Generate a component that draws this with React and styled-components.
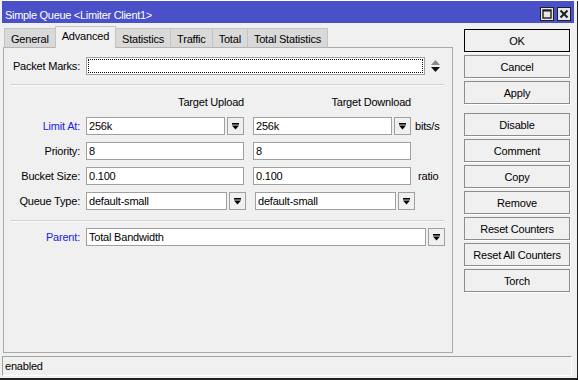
import React from "react";
import styled, { createGlobalStyle } from "styled-components";

const GlobalStyle = createGlobalStyle`
  html, body { margin: 0; padding: 0; background: #ffffff; }
  body {
    font-family: "Liberation Sans", Arial, sans-serif;
    font-size: 11px;
    letter-spacing: -0.2px;
    color: #000;
  }
  * { box-sizing: border-box; }
`;

const Frame = styled.div`
  width: 579px;
  height: 380px;
  padding-top: 1px;
  background: #fff;
`;

const Window = styled.div`
  width: 578px;
  height: 379px;
  display: flex;
  flex-direction: column;
  background: #f0f0f0;
  border-right: 1px solid #222;
  border-bottom: 2px solid #222;
`;

const TitleBar = styled.div`
  height: 22px;
  margin: 0 3px 0 2px;
  background: #4a50c8;
  color: #fff;
  display: flex;
  align-items: flex-end;
  justify-content: space-between;
  padding: 0 3px 1px 3px;
`;

const TitleText = styled.div`
  line-height: 14px;
  font-size: 11px;
  letter-spacing: -0.3px;
`;

const TitleButtons = styled.div`
  display: flex;
  gap: 3px;
  margin-bottom: 1px;
`;

const TitleButton = styled.div`
  width: 14px;
  height: 14px;
  border: 1px solid #1e1e1e;
  background: #e6e6e6;
  display: flex;
  align-items: center;
  justify-content: center;
`;

const Body = styled.div`
  flex: 1;
  display: flex;
  min-height: 0;
`;

const LeftCol = styled.div`
  width: 453px;
  padding: 3px 0 1px 3px;
  display: flex;
  flex-direction: column;
`;

const TabRow = styled.div`
  display: flex;
  align-items: flex-end;
  height: 22px;
  padding-left: 1px;
  margin-bottom: -1px;
  position: relative;
  z-index: 1;
`;

const Tab = styled.div`
  height: ${(p) => (p.$active ? "22px" : "20px")};
  padding: 0 6px;
  line-height: ${(p) => (p.$active ? "19px" : "20px")};
  background: ${(p) => (p.$active ? "#f0f0f0" : "#d9d9d9")};
  border: 1px solid #c4c4c4;
  border-bottom: ${(p) => (p.$active ? "none" : "1px solid #b4b4b4")};
  margin-left: -1px;
  white-space: nowrap;
  &:first-child { margin-left: 0; }
`;

const Panel = styled.div`
  flex: 1;
  border: 1px solid #a9a9a9;
  display: flex;
  flex-direction: column;
`;

const Row = styled.div`
  display: flex;
  align-items: center;
  height: 18px;
  margin-top: ${(p) => p.$top || 7}px;
`;

const Label = styled.div`
  width: 76px;
  margin-right: 6px;
  text-align: right;
  white-space: nowrap;
  color: ${(p) => (p.$link ? "#2222dd" : "#000")};
`;

const Fields = styled.div`
  display: flex;
  align-items: center;
  gap: 9px;
`;

const Combo = styled.div`
  display: flex;
  align-items: center;
  gap: 2px;
`;

const Input = styled.div`
  width: ${(p) => p.$w}px;
  height: 18px;
  border: 1px solid #a0a0a0;
  background: #fff;
  padding-left: 2px;
  line-height: 16px;
  white-space: nowrap;
  overflow: hidden;
`;

const FocusInput = styled(Input)`
  outline: 1px dotted #111;
  outline-offset: -3px;
`;

const DropButton = styled.div`
  width: 17px;
  height: 18px;
  border: 1px solid #a0a0a0;
  background: #f0f0f0;
  display: flex;
  align-items: center;
  justify-content: center;
`;

const Unit = styled.div`
  margin-left: ${(p) => p.$offset}px;
`;

const Separator = styled.div`
  margin: ${(p) => p.$top}px 8px 0 7px;
  border-top: 1px solid #d0d0d0;
  border-bottom: 1px solid #fbfbfb;
`;

const HeaderRow = styled.div`
  display: flex;
  margin-top: 9px;
  padding-left: 82px;
  gap: 9px;
  line-height: 14px;
`;

const Header = styled.div`
  width: 158px;
  text-align: right;
`;

const SpinIcon = styled.div`
  margin-left: 6px;
  display: flex;
`;

const ButtonCol = styled.div`
  width: 106px;
  margin-left: 11px;
  padding-top: 6px;
  display: flex;
  flex-direction: column;
  gap: 3px;
`;

const Button = styled.div`
  height: 23px;
  border: 1px solid ${(p) => (p.$default ? "#000" : "#8c8c8c")};
  background: #f0f0f0;
  box-shadow: 1px 1px 0 #ffffff;
  display: flex;
  align-items: center;
  justify-content: center;
  margin-top: ${(p) => (p.$spaced ? "6px" : "0")};
  white-space: nowrap;
`;

const StatusBar = styled.div`
  height: 20px;
  margin: 2px 5px 2px 2px;
  border-top: 1px solid #a0a0a0;
  border-left: 1px solid #a0a0a0;
  border-right: 1px solid #fff;
  border-bottom: 1px solid #fff;
  padding-left: 2px;
  display: flex;
  align-items: center;
`;

const DownArrow = () => (
  <svg width="7" height="7" viewBox="0 0 7 7">
    <rect x="0" y="0" width="7" height="1.6" fill="#000" />
    <polygon points="0,2.6 7,2.6 3.5,6.6" fill="#000" />
  </svg>
);

const UpDown = () => (
  <svg width="9" height="12" viewBox="0 0 9 12">
    <polygon points="0,5 9,5 4.5,0" fill="#8a8a8a" />
    <polygon points="0,7 9,7 4.5,12" fill="#111" />
  </svg>
);

const MaxIcon = () => (
  <svg width="10" height="10" viewBox="0 0 10 10">
    <rect x="1" y="1" width="8" height="8" fill="none" stroke="#1e1e1e" strokeWidth="1.4" />
    <rect x="1" y="1" width="8" height="1.5" fill="#1e1e1e" />
  </svg>
);

const CloseIcon = () => (
  <svg width="10" height="10" viewBox="0 0 10 10">
    <path d="M1.5 1.5 L8.5 8.5 M8.5 1.5 L1.5 8.5" stroke="#1e1e1e" strokeWidth="2" />
  </svg>
);

const ComboField = ({ value, w }) => (
  <Combo>
    <Input $w={w}>{value}</Input>
    <DropButton>
      <DownArrow />
    </DropButton>
  </Combo>
);

const tabs = ["General", "Advanced", "Statistics", "Traffic", "Total", "Total Statistics"];
const buttons = [
  { t: "OK", d: true },
  { t: "Cancel" },
  { t: "Apply" },
  { t: "Disable", s: true },
  { t: "Comment" },
  { t: "Copy" },
  { t: "Remove" },
  { t: "Reset Counters" },
  { t: "Reset All Counters" },
  { t: "Torch" },
];

export default function App() {
  return (
    <Frame>
      <GlobalStyle />
      <Window>
        <TitleBar>
          <TitleText>Simple Queue &lt;Limiter Client1&gt;</TitleText>
          <TitleButtons>
            <TitleButton>
              <MaxIcon />
            </TitleButton>
            <TitleButton>
              <CloseIcon />
            </TitleButton>
          </TitleButtons>
        </TitleBar>
        <Body>
          <LeftCol>
            <TabRow>
              {tabs.map((t) => (
                <Tab key={t} $active={t === "Advanced"}>
                  {t}
                </Tab>
              ))}
            </TabRow>
            <Panel>
              <Row $top={9}>
                <Label>Packet Marks:</Label>
                <FocusInput $w={339} />
                <SpinIcon>
                  <UpDown />
                </SpinIcon>
              </Row>
              <Separator $top={9} />
              <HeaderRow>
                <Header>Target Upload</Header>
                <Header>Target Download</Header>
              </HeaderRow>
              <Row $top={8}>
                <Label $link>Limit At:</Label>
                <Fields>
                  <ComboField value="256k" w={139} />
                  <ComboField value="256k" w={139} />
                </Fields>
                <Unit $offset={4}>bits/s</Unit>
              </Row>
              <Row>
                <Label>Priority:</Label>
                <Fields>
                  <Input $w={158}>8</Input>
                  <Input $w={158}>8</Input>
                </Fields>
              </Row>
              <Row>
                <Label>Bucket Size:</Label>
                <Fields>
                  <Input $w={158}>0.100</Input>
                  <Input $w={158}>0.100</Input>
                </Fields>
                <Unit $offset={7}>ratio</Unit>
              </Row>
              <Row>
                <Label>Queue Type:</Label>
                <Fields>
                  <ComboField value="default-small" w={141} />
                  <ComboField value="default-small" w={141} />
                </Fields>
              </Row>
              <Separator $top={10} />
              <Row $top={6}>
                <Label $link>Parent:</Label>
                <ComboField value="Total Bandwidth" w={340} />
              </Row>
            </Panel>
          </LeftCol>
          <ButtonCol>
            {buttons.map((b) => (
              <Button key={b.t} $default={b.d} $spaced={b.s}>
                {b.t}
              </Button>
            ))}
          </ButtonCol>
        </Body>
        <StatusBar>enabled</StatusBar>
      </Window>
    </Frame>
  );
}
